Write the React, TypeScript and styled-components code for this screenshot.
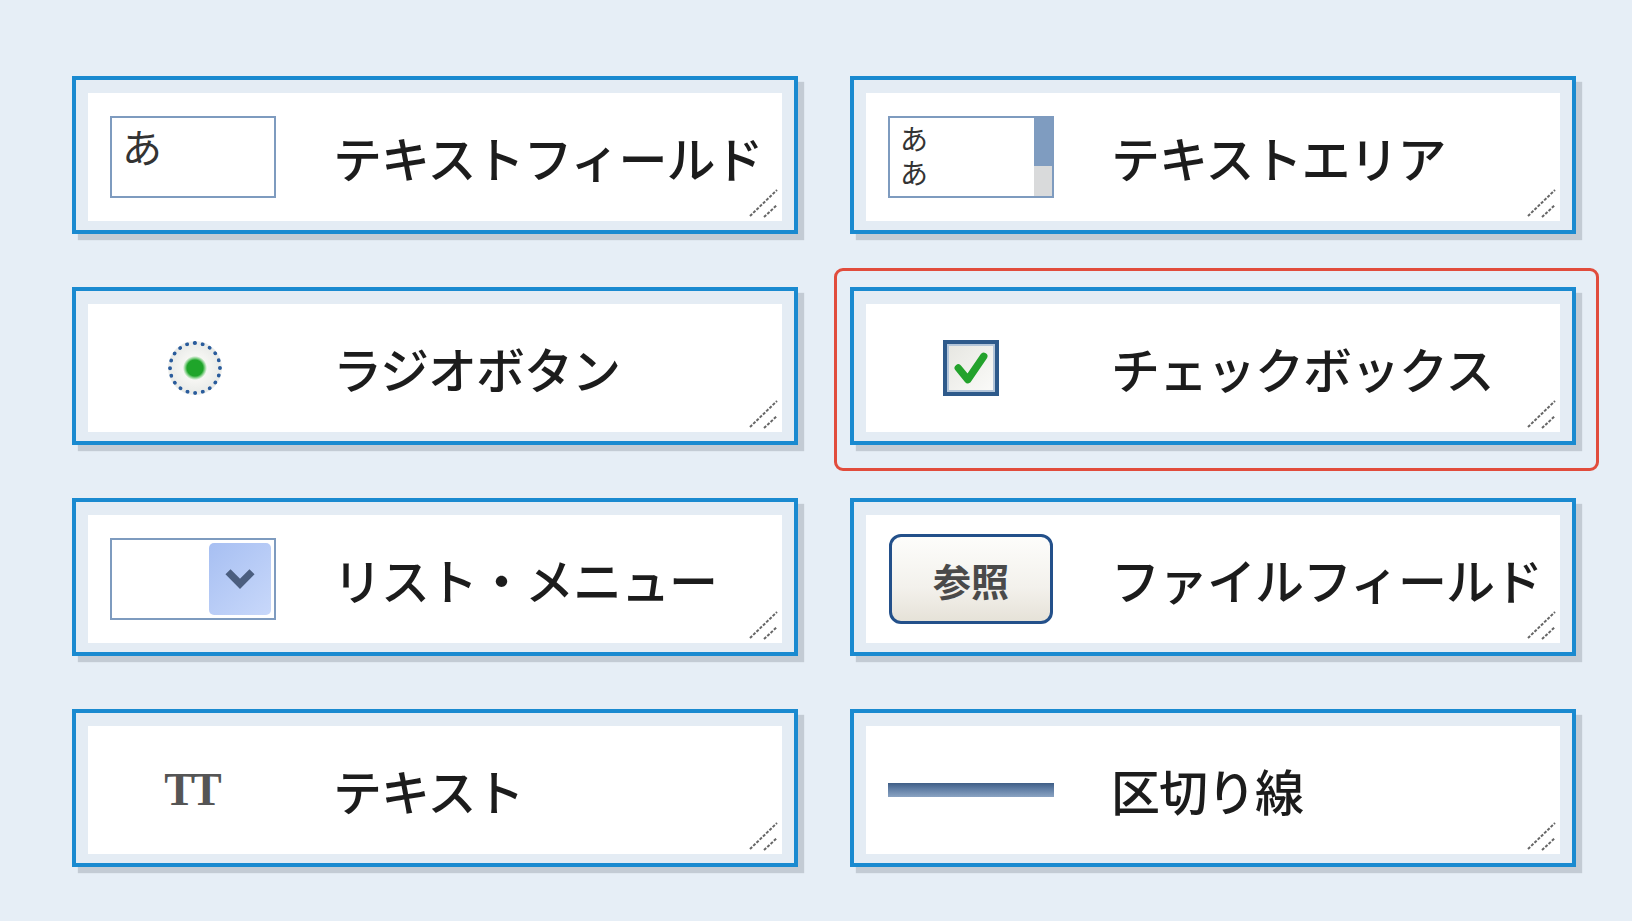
import styled, { createGlobalStyle, css } from "styled-components";

const GlobalStyle = createGlobalStyle`
  html, body {
    margin: 0;
    padding: 0;
    background: #e6eef6;
  }
  body {
    font-family: "Noto Sans CJK JP", "Noto Sans", sans-serif;
  }
`;

const Page = styled.div`
  min-height: 100vh;
  background: #e6eef6;
  box-sizing: border-box;
  padding: 76px 0 0 72px;
`;

const Grid = styled.div`
  display: grid;
  grid-template-columns: 726px 726px;
  grid-auto-rows: 158px;
  column-gap: 52px;
  row-gap: 53px;
`;

const Card = styled.div<{ $selected?: boolean }>`
  position: relative;
  box-sizing: border-box;
  border: 4px solid #1a8ad0;
  background: #e4ecf4;
  padding: 13px 12px 9px 12px;
  box-shadow: 6px 6px 1px #c3cbd4;

  ${(p) =>
    p.$selected &&
    css`
      &::after {
        content: "";
        position: absolute;
        top: -23px;
        left: -20px;
        right: -27px;
        bottom: -30px;
        border: 3px solid #e14c3c;
        border-radius: 9px;
        pointer-events: none;
      }
    `}
`;

const Face = styled.div`
  position: relative;
  height: 100%;
  background: #fff;
  display: flex;
  align-items: center;
  padding-left: 22px;
`;

const IconSlot = styled.div`
  width: 166px;
  flex-shrink: 0;
  display: flex;
  align-items: center;
  justify-content: center;
  margin-right: 57px;
`;

const Label = styled.div`
  font-family: "Noto Sans CJK JP", sans-serif;
  font-size: 49px;
  font-weight: 500;
  color: #1c1c1c;
  line-height: 1;
  letter-spacing: -1px;
  margin-top: -1px;
  white-space: nowrap;
`;

const Grip = styled.svg`
  position: absolute;
  right: 3px;
  bottom: 2px;
  width: 32px;
  height: 32px;
`;

const FieldBox = styled.div`
  box-sizing: border-box;
  width: 166px;
  height: 82px;
  border: 2px solid #7e9bbf;
  background: #fff;
  display: flex;
`;

const FieldText = styled.div`
  font-family: "Noto Sans CJK JP", sans-serif;
  color: #333;
  line-height: 1;
  font-size: 40px;
  padding: 8px 0 0 10px;
`;

const AreaLines = styled.div`
  display: flex;
  flex-direction: column;
  gap: 6px;
  padding: 6px 0 0 10px;
`;

const AreaLine = styled.span`
  font-family: "Noto Sans CJK JP", sans-serif;
  color: #333;
  font-size: 28px;
  line-height: 28px;
`;

const Scrollbar = styled.div`
  width: 18px;
  margin-left: auto;
  background: linear-gradient(#7f9cc0 0 62%, #d9dadb 62%);
`;

const Radio = styled.div`
  box-sizing: border-box;
  width: 54px;
  height: 54px;
  border-radius: 50%;
  border: 4px dotted #2a5c9c;
  background: radial-gradient(
    circle,
    #1fa52a 0 8px,
    #8fd593 10px,
    #f6f6f3 12px,
    #e2e5e2 100%
  );
  margin-left: 4px;
`;

const CheckBox = styled.div`
  box-sizing: border-box;
  width: 56px;
  height: 56px;
  border: 4px solid #2e5a8b;
  box-shadow: inset 0 0 0 2px #b3c5d9;
  background: linear-gradient(135deg, #e6e6e1, #fbfbf9);
  display: flex;
  align-items: center;
  justify-content: center;
`;

const DropButton = styled.div`
  margin: 3px 3px 3px auto;
  width: 62px;
  border-radius: 5px;
  background: linear-gradient(135deg, #a7bff2, #c8d8fa);
  display: flex;
  align-items: center;
  justify-content: center;
`;

const FileButton = styled.div`
  box-sizing: border-box;
  width: 164px;
  height: 90px;
  border: 3px solid #23508a;
  border-radius: 12px;
  background: linear-gradient(#fdfdfb, #f3f1ec 60%, #e6e2d8);
  display: flex;
  align-items: center;
  justify-content: center;
  font-family: "Noto Sans CJK JP", sans-serif;
  font-size: 38px;
  font-weight: 700;
  color: #4a4a4a;
`;

const TypeGlyph = styled.div`
  font-family: "Liberation Serif", serif;
  font-weight: 700;
  font-size: 46px;
  letter-spacing: -4px;
  color: #555;
  line-height: 1;
  margin-right: 4px;
`;

const Rule = styled.div`
  width: 166px;
  height: 14px;
  background: linear-gradient(#3f5e86, #5e7ca3 40%, #8aa3c2);
`;

const ResizeGrip = () => (
  <Grip viewBox="0 0 32 32">
    <line x1="3" y1="29" x2="30" y2="3" stroke="#666" strokeWidth="2" strokeDasharray="3 1.5" />
    <line x1="17" y1="30" x2="30" y2="18" stroke="#666" strokeWidth="2" strokeDasharray="3 1.5" />
  </Grip>
);

type Item = { label: string; icon: React.ReactNode; selected?: boolean };

const items: Item[] = [
  {
    label: "テキストフィールド",
    icon: (
      <FieldBox>
        <FieldText>あ</FieldText>
      </FieldBox>
    ),
  },
  {
    label: "テキストエリア",
    icon: (
      <FieldBox>
        <AreaLines>
          <AreaLine>あ</AreaLine>
          <AreaLine>あ</AreaLine>
        </AreaLines>
        <Scrollbar />
      </FieldBox>
    ),
  },
  { label: "ラジオボタン", icon: <Radio /> },
  {
    label: "チェックボックス",
    selected: true,
    icon: (
      <CheckBox>
        <svg width="36" height="36" viewBox="0 0 34 34">
          <polyline
            points="5,17 14,28 29,6"
            fill="none"
            stroke="#23a22c"
            strokeWidth="7"
            strokeLinejoin="round"
            strokeLinecap="round"
          />
        </svg>
      </CheckBox>
    ),
  },
  {
    label: "リスト・メニュー",
    icon: (
      <FieldBox>
        <DropButton>
          <svg width="36" height="24" viewBox="0 0 30 20">
            <polyline
              points="5,4 15,14 25,4"
              fill="none"
              stroke="#4b5e7f"
              strokeWidth="6"
              strokeLinejoin="miter"
            />
          </svg>
        </DropButton>
      </FieldBox>
    ),
  },
  { label: "ファイルフィールド", icon: <FileButton>参照</FileButton> },
  { label: "テキスト", icon: <TypeGlyph>TT</TypeGlyph> },
  { label: "区切り線", icon: <Rule /> },
];

export default function App() {
  return (
    <Page>
      <GlobalStyle />
      <Grid>
        {items.map((item) => (
          <Card key={item.label} $selected={item.selected}>
            <Face>
              <IconSlot>{item.icon}</IconSlot>
              <Label>{item.label}</Label>
              <ResizeGrip />
            </Face>
          </Card>
        ))}
      </Grid>
    </Page>
  );
}
